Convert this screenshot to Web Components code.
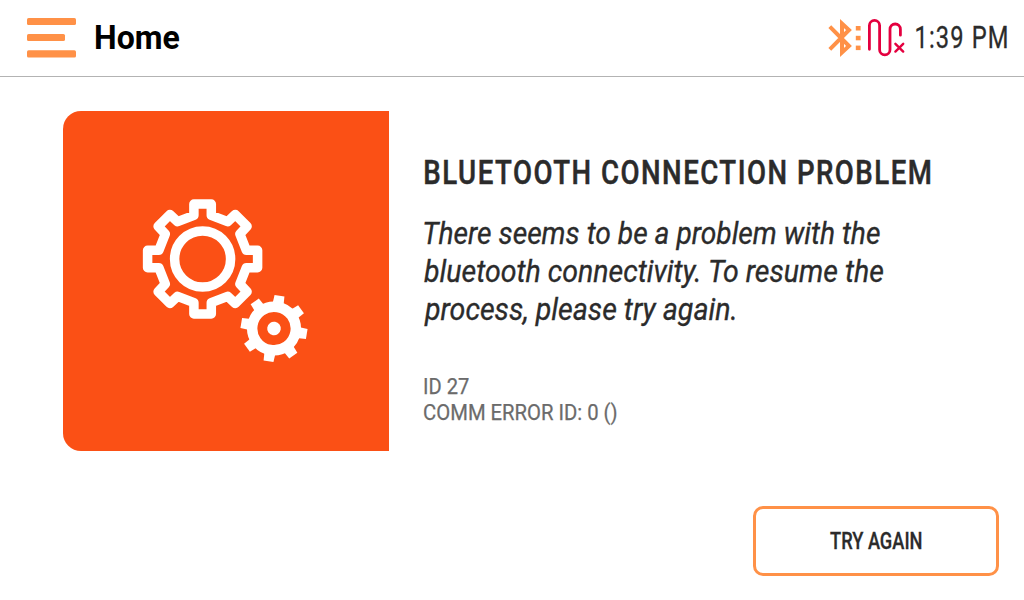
<!DOCTYPE html>
<html lang="en">
<head>
<meta charset="utf-8">
<title>Home</title>
<style>
html,body{margin:0;height:100%;background:#fff;overflow:hidden}
body{font-family:Roboto,"Liberation Sans",sans-serif;color:#2b2b2b}
</style>
</head>
<body>
<app-screen></app-screen>
<script>
const define = (name, html, setup) => {
  const tpl = document.createElement('template');
  tpl.innerHTML = html;
  customElements.define(name, class extends HTMLElement {
    constructor() {
      super();
      this.attachShadow({ mode: 'open' }).append(tpl.content.cloneNode(true));
    }
    connectedCallback() { if (setup) setup(this); }
  });
};

// One line of condensed text: its ink is scaled horizontally to the `width` attribute.
define('condensed-text', `
<style>
:host{display:block}
span{display:block;width:max-content;white-space:pre;transform-origin:0 50%}
</style><span></span>`, host => {
  const span = host.shadowRoot.querySelector('span');
  span.textContent = host.getAttribute('text');
  const cs = getComputedStyle(span);
  const ctx = document.createElement('canvas').getContext('2d');
  ctx.font = `${cs.fontStyle} ${cs.fontWeight} ${cs.fontSize} ${cs.fontFamily}`;
  if (cs.letterSpacing !== 'normal') ctx.letterSpacing = cs.letterSpacing;
  const m = ctx.measureText(span.textContent);
  const w = +host.getAttribute('width');
  const k = w / (m.actualBoundingBoxRight + m.actualBoundingBoxLeft);
  host.style.width = w + 'px';
  span.style.transform = `translateX(${m.actualBoundingBoxLeft * k}px) scaleX(${k})`;
});

define('menu-icon', `
<style>:host{display:block;width:49px;height:40px}svg{display:block}</style>
<svg width="49" height="40" fill="#ff9147"><rect width="49" height="7" rx="1.6"/><rect y="16" width="38" height="7" rx="1.6"/><rect y="32.3" width="49" height="7.2" rx="1.6"/></svg>`);

define('bluetooth-icon', `
<style>:host{display:block;width:38px;height:40px}svg{display:block}</style>
<svg width="38" height="40" fill="none" stroke="#ff9147" stroke-width="4"><path d="M1.8 8.7 21 28 14 34.4V5.6L21 12 1.8 31.3"/><g fill="#ff9147" stroke="none"><rect x="27.8" y="8" width="4.8" height="4.5"/><rect x="27.8" y="17.8" width="4.8" height="4.5"/><rect x="27.8" y="27.6" width="4.8" height="4.5"/></g></svg>`);

define('probe-icon', `
<style>:host{display:block;width:40px;height:40px}svg{display:block}</style>
<svg width="40" height="40" fill="none" stroke="#e4003f" stroke-width="2.8" stroke-linecap="round"><path d="M3.4 31.3V7.5a5.1 5.1 0 0 1 10.2 0V31.7a5.2 5.2 0 0 0 10.4 0V11.2a5.2 5.2 0 0 1 10.4 0V17.2"/><path stroke-width="2.4" d="M29.4 25.8l7.8 7.8M37.2 25.8l-7.8 7.8"/></svg>`);

define('app-header', `
<style>
:host{display:flex;box-sizing:border-box;height:77px;border-bottom:1px solid #b3b3b3;align-items:flex-start;padding:18px 18px 0 27px}
.title{margin-left:20px;font-size:34px;font-weight:700;color:#000;line-height:39px}
.status{margin-left:auto;display:flex}
.time{margin-left:9.5px;font-size:31.5px;line-height:40px;letter-spacing:1.5px;-webkit-text-stroke:.3px}
</style>
<menu-icon></menu-icon>
<condensed-text class="title" text="Home" width="83.5"></condensed-text>
<div class="status"><bluetooth-icon></bluetooth-icon><probe-icon></probe-icon>
<condensed-text class="time" text="1:39 PM" width="90.5"></condensed-text></div>`);

define('gears-icon', `
<style>:host{display:block;width:326px;height:340px}svg{display:block}</style>
<svg width="326" height="340" fill="none" stroke="#fff" stroke-linejoin="round">
<g transform="translate(139.6 148)" stroke-width="9.5"><circle r="28"/><path id="big"/></g>
<g transform="translate(211 217.5) rotate(9.5)"><circle r="21.8" stroke-width="10.4"/><circle r="6.8" fill="#fff" stroke="none"/><g id="teeth" fill="#fff" stroke="none"></g></g>
</svg>`, host => {
  const root = host.shadowRoot;
  const quarter = [[-8.7,-55],[8.7,-55],[8.7,-43.7],[25,-37.3],[32.7,-44.5],[44.5,-32.7],[37.3,-25],[43.7,-8.7]];
  const pts = [];
  for (let i = 0; i < 4; i++)
    for (const [x, y] of quarter) pts.push([[x,y],[-y,x],[-x,-y],[y,-x]][i].join(' '));
  root.getElementById('big').setAttribute('d', 'M' + pts.join('L') + 'Z');
  root.getElementById('teeth').innerHTML = Array.from({length: 8}, (_, i) =>
    `<path transform="rotate(${i * 45})" d="M-5.6-24 -5-33.2H5L5.6-24Z"/>`).join('');
});

define('error-card', `
<style>
:host{display:flex;height:340px;padding:34px 0 0 63px}
.art{background:#fb5015;border-radius:18px 0 0 18px;width:326px;height:340px;flex:none}
.body{margin-left:35px;padding-top:42px}
.title{margin-left:1px;font-size:33.5px;font-weight:500;line-height:40px;letter-spacing:1.8px;-webkit-text-stroke:.5px}
.msg{font-size:32px;font-style:italic;line-height:38px;margin-top:21px;-webkit-text-stroke:.35px}
.ids{font-size:22px;line-height:26px;color:#6b6b6b;margin-top:46px;-webkit-text-stroke:.25px}
</style>
<div class="art"><gears-icon></gears-icon></div>
<div class="body">
<condensed-text class="title" text="BLUETOOTH CONNECTION PROBLEM" width="505"></condensed-text>
<div class="msg">
<condensed-text text="There seems to be a problem with the" width="456"></condensed-text>
<condensed-text text="bluetooth connectivity. To resume the" width="460"></condensed-text>
<condensed-text text="process, please try again." width="311"></condensed-text>
</div>
<div class="ids">
<condensed-text text="ID 27" width="45"></condensed-text>
<condensed-text text="COMM ERROR ID: 0 ()" width="193"></condensed-text>
</div>
</div>`);

define('action-button', `
<style>
:host{display:block}
button{all:unset;box-sizing:border-box;display:flex;align-items:center;justify-content:center;width:246px;height:70px;padding-top:2px;border:3px solid #ff9147;border-radius:10px;font-size:23px;font-weight:500;line-height:30px;-webkit-text-stroke:.3px}
</style><button><slot></slot></button>`);

define('app-screen', `
<style>
:host{display:flex;flex-direction:column;width:1024px;height:600px;background:#fff}
footer{margin-top:auto;display:flex;justify-content:flex-end;padding:0 25px 24px 0}
</style>
<app-header></app-header><error-card></error-card>
<footer><action-button><condensed-text text="TRY AGAIN" width="91.5"></condensed-text></action-button></footer>`);
</script>
</body>
</html>
